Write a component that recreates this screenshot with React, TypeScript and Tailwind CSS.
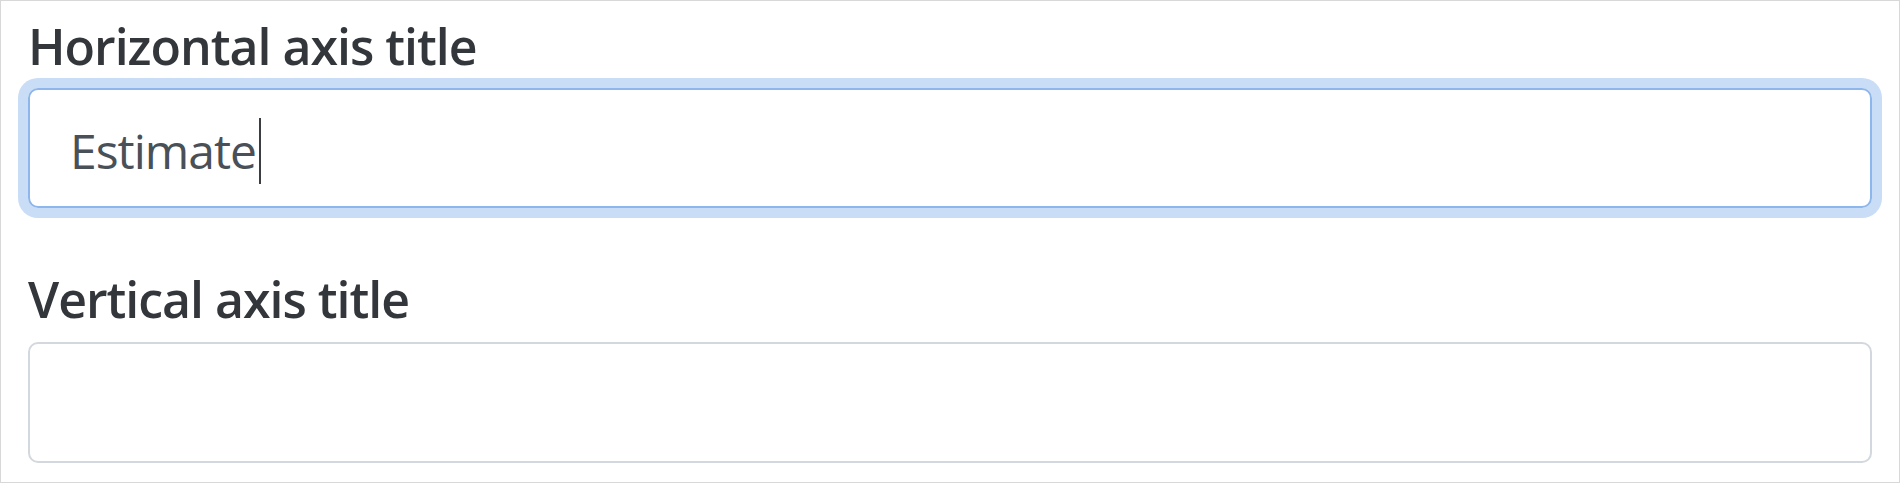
import React from "react";

export default function App() {
  return (
    <div className="w-[1900px] h-[483px] border border-[#d8d8d8] bg-white box-border pt-[14px] px-[27px] font-['Open_Sans',sans-serif]">
      <div className="text-[50px] leading-[62px] font-semibold text-[#33363b] tracking-[-1px]">
        Horizontal axis title
      </div>
      <div className="mt-[11px] h-[120px] rounded-[10px] border-2 border-[#8db6ec] shadow-[0_0_0_10px_#c9ddf6] pl-[40px] pt-[27px] text-[48px] leading-[68px] text-[#495057] tracking-[-1px]">
        Estimate
        <span className="inline-block w-[2px] h-[66px] bg-[#3a3d42] align-[-15px] ml-[3px]" />
      </div>
      <div className="mt-[60px] text-[50px] leading-[62px] font-semibold text-[#33363b] tracking-[-1px]">
        Vertical axis title
      </div>
      <div className="mt-[12px] h-[121px] rounded-[10px] border-2 border-[#d3d8de]" />
    </div>
  );
}
